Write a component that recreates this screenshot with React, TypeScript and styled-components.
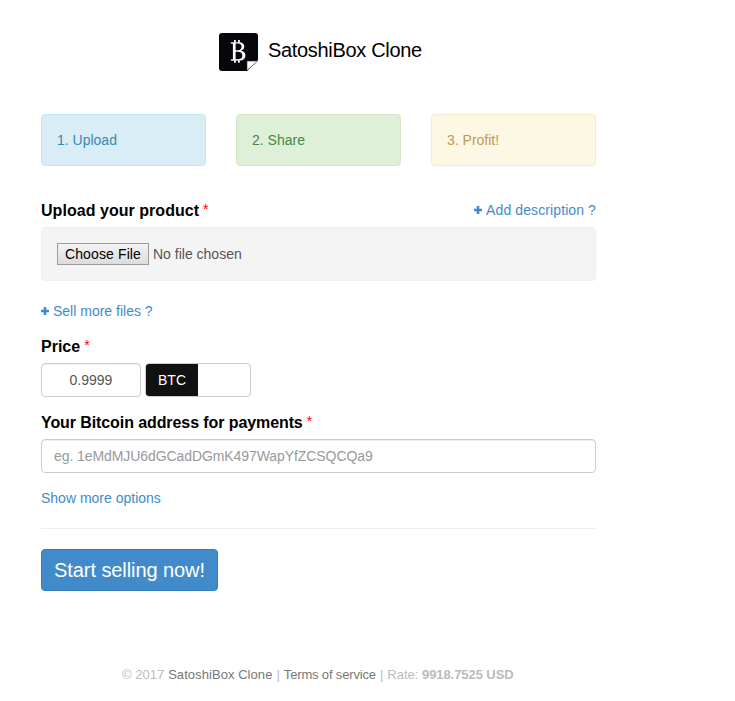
import React from "react";
import styled, { createGlobalStyle } from "styled-components";

const GlobalStyle = createGlobalStyle`
  * { box-sizing: border-box; }
  body {
    margin: 0;
    background: #fff;
    color: #333;
    font: 14px/20px "Liberation Sans", Arial, sans-serif;
  }
  a { color: #428bca; text-decoration: none; }
`;

const Page = styled.main`
  width: 555px;
  margin: 0 0 0 41px;
  padding-top: 33px;
`;

const Header = styled.header`
  display: flex;
  height: 38px;
  padding-left: 178px;
  gap: 10px;
`;

const Brand = styled.h1`
  margin: 0;
  color: #000;
  font-size: 20px;
  font-weight: 400;
  line-height: 34px;
  letter-spacing: -0.32px;
  white-space: nowrap;
`;

const Steps = styled.section`
  display: grid;
  grid-template-columns: repeat(3, 1fr);
  gap: 30px;
  margin-top: 43px;
`;

const tones = {
  info: ["#d9edf7", "#bce8f1", "#3a87ad"],
  success: ["#dff0d8", "#d6e9c6", "#468847"],
  warning: ["#fcf8e3", "#faebcc", "#c09853"],
};

const Step = styled.div<{ $tone: keyof typeof tones }>`
  height: 52px;
  padding: 15px;
  border: 1px solid ${(p) => tones[p.$tone][1]};
  border-radius: 4px;
  background: ${(p) => tones[p.$tone][0]};
  color: ${(p) => tones[p.$tone][2]};
`;

const FieldHead = styled.div<{ $top: number }>`
  display: flex;
  justify-content: space-between;
  height: 20px;
  margin-top: ${(p) => p.$top}px;
`;

const Label = styled.label<{ $spacing?: number }>`
  display: flex;
  color: #000;
  font-size: 16px;
  font-weight: 700;
  line-height: 22px;
  white-space: nowrap;
  letter-spacing: ${(p) => p.$spacing ?? 0}px;
`;

const Required = styled.span`
  margin-left: 4px;
  color: #f00;
  font-size: 14px;
  font-weight: 400;
  line-height: 19px;
`;

const ActionLink = styled.a<{ $spacing?: number }>`
  display: inline-flex;
  align-items: center;
  gap: 4px;
  height: 20px;
  white-space: nowrap;
  letter-spacing: ${(p) => p.$spacing ?? 0}px;
`;

const Well = styled.div`
  display: flex;
  align-items: center;
  gap: 4px;
  height: 54px;
  margin-top: 7px;
  padding: 0 15px;
  border: 1px solid #f0f0f0;
  border-radius: 4px;
  background: #f4f4f4;
  color: #555;
`;

const FileButton = styled.button`
  width: 92px;
  height: 22px;
  padding: 0;
  border: 1px solid #9b9b9b;
  border-radius: 0;
  background: linear-gradient(#f4f4f4, #dcdcdc);
  color: #000;
  font: inherit;
  line-height: 20px;
  letter-spacing: 0.12px;
  white-space: nowrap;
`;

const LinkRow = styled.div<{ $top: number }>`
  display: flex;
  height: 20px;
  margin-top: ${(p) => p.$top}px;
`;

const PriceRow = styled.div`
  display: flex;
  gap: 4px;
  margin-top: 7px;
`;

const Input = styled.input<{ $width: string; $center?: boolean; $spacing?: number }>`
  display: block;
  width: ${(p) => p.$width};
  height: 34px;
  padding: 6px 12px;
  border: 1px solid #ccc;
  border-radius: 4px;
  box-shadow: inset 0 1px 1px rgba(0, 0, 0, 0.075);
  background: #fff;
  color: #555;
  font: inherit;
  letter-spacing: ${(p) => p.$spacing ?? 0}px;
  text-align: ${(p) => (p.$center ? "center" : "left")};
  &::placeholder { color: #999; opacity: 1; }
`;

const CurrencySwitch = styled.div`
  width: 106px;
  height: 34px;
  overflow: hidden;
  border: 1px solid #ccc;
  border-radius: 4px;
  background: #fff;
`;

const CurrencyOption = styled.span`
  display: block;
  width: 52px;
  height: 32px;
  background: #111;
  color: #fff;
  line-height: 32px;
  text-align: center;
`;

const AddressBox = styled.div`
  margin-top: 7px;
`;

const Divider = styled.hr`
  height: 1px;
  margin: 20px 0;
  border: 0;
  background: #eee;
`;

const SubmitButton = styled.button`
  display: block;
  width: 177px;
  height: 42px;
  padding: 0;
  border: 1px solid #357ebd;
  border-radius: 4px;
  background: #428bca;
  color: #fff;
  font: 20px/40px "Liberation Sans", Arial, sans-serif;
  letter-spacing: -0.08px;
  white-space: nowrap;
`;

const Footer = styled.footer`
  display: flex;
  gap: 4px;
  height: 20px;
  margin: 74px 0 0 81px;
  color: #bbb;
  font-size: 13px;
  white-space: nowrap;
`;

const FooterLink = styled.a<{ $spacing: number }>`
  && { color: #777; }
  letter-spacing: ${(p) => p.$spacing}px;
`;

const Rate = styled.span`
  b { letter-spacing: -0.07px; }
`;

const Logo = () => (
  <svg width="39" height="38" viewBox="0 0 39 38" aria-hidden="true">
    <path d="M3 0H36Q39 0 39 3V27L28 38H3Q0 38 0 35V3Q0 0 3 0Z" fill="#06070b" />
    <path d="M28 37.5V28H38.5Z" fill="#fff" stroke="#333" strokeWidth=".6" />
    <g fill="#fff">
      <path
        fillRule="evenodd"
        d="M11.8 9.2H19.5C23.5 9.2 25.3 11 25.3 13.6C25.3 15.8 24 17.2 21.8 17.8C24.8 18.3 26.4 20 26.4 22.6C26.4 25.8 24 27.8 19.8 27.8H11.8V26.6L13.9 26.2V10.8L11.8 10.4ZM16.6 10.6V17.2H18.8C21.3 17.2 22.5 16 22.5 13.8C22.5 11.7 21.3 10.6 18.8 10.6ZM16.6 18.7V26.3H19C22 26.3 23.3 25 23.3 22.5C23.3 20 21.9 18.7 19 18.7Z"
      />
      <path d="M15 7H16.8V9.5H15ZM19 7H20.8V9.5H19ZM15 27.5H16.8V29.8H15ZM19 27.5H20.8V29.8H19Z" />
    </g>
  </svg>
);

const Plus = () => (
  <svg width="8" height="8" viewBox="0 0 8 8" aria-hidden="true">
    <path d="M2.7 0H5.3V2.7H8V5.3H5.3V8H2.7V5.3H0V2.7H2.7Z" fill="#428bca" />
  </svg>
);

export default function App() {
  return (
    <>
      <GlobalStyle />
      <Page>
        <Header>
          <Logo />
          <Brand>SatoshiBox Clone</Brand>
        </Header>
        <Steps>
          <Step $tone="info">1. Upload</Step>
          <Step $tone="success">2. Share</Step>
          <Step $tone="warning">3. Profit!</Step>
        </Steps>
        <FieldHead $top={34}>
          <Label $spacing={0.04}>Upload your product<Required>*</Required></Label>
          <ActionLink href="#" $spacing={0.1}><Plus />Add description ?</ActionLink>
        </FieldHead>
        <Well>
          <FileButton type="button">Choose File</FileButton>
          <span>No file chosen</span>
        </Well>
        <LinkRow $top={20}>
          <ActionLink href="#"><Plus />Sell more files ?</ActionLink>
        </LinkRow>
        <FieldHead $top={15}>
          <Label htmlFor="price">Price<Required>*</Required></Label>
        </FieldHead>
        <PriceRow>
          <Input id="price" $width="100px" $center defaultValue="0.9999" />
          <CurrencySwitch><CurrencyOption>BTC</CurrencyOption></CurrencySwitch>
        </PriceRow>
        <FieldHead $top={15}>
          <Label htmlFor="address" $spacing={-0.09}>Your Bitcoin address for payments<Required>*</Required></Label>
        </FieldHead>
        <AddressBox>
          <Input id="address" $width="100%" $spacing={-0.08} placeholder="eg. 1eMdMJU6dGCadDGmK497WapYfZCSQCQa9" />
        </AddressBox>
        <LinkRow $top={15}>
          <ActionLink href="#">Show more options</ActionLink>
        </LinkRow>
        <Divider />
        <SubmitButton type="button">Start selling now!</SubmitButton>
        <Footer>
          <span>© 2017</span>
          <FooterLink href="#" $spacing={0.06}>SatoshiBox Clone</FooterLink>
          <span>|</span>
          <FooterLink href="#" $spacing={-0.16}>Terms of service</FooterLink>
          <span>|</span>
          <Rate>Rate: <b>9918.7525 USD</b></Rate>
        </Footer>
      </Page>
    </>
  );
}
